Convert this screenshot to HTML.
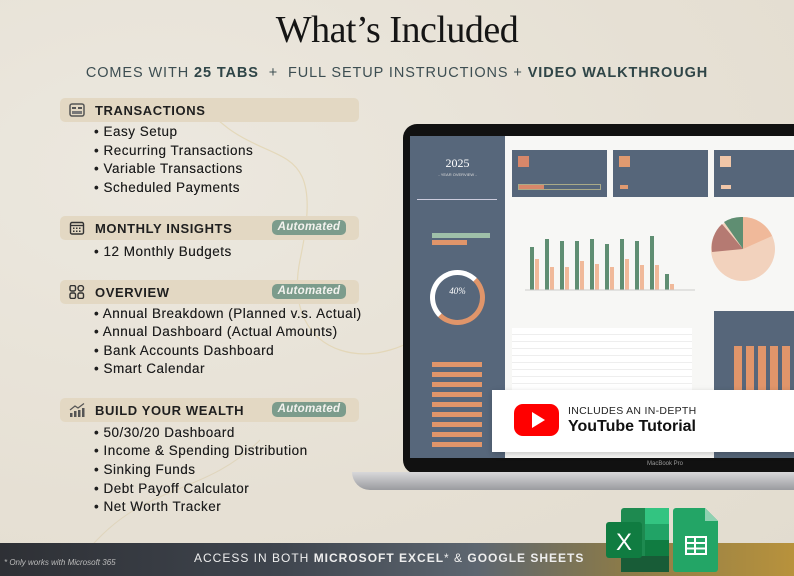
<!DOCTYPE html>
<html><head><meta charset="utf-8"><style>
*{margin:0;padding:0;box-sizing:border-box}
body{width:794px;height:576px;overflow:hidden;background:#e9e4da;font-family:"Liberation Sans",sans-serif;position:relative}
.bg{position:absolute;inset:0;background:radial-gradient(ellipse at 20% 30%,#ece8df 0%,#e6e0d4 60%,#e2dccf 100%)}
.title{position:absolute;top:8px;left:0;width:794px;text-align:center;font-family:"Liberation Serif",serif;font-size:38px;color:#151515;letter-spacing:-0.5px}
.sub{position:absolute;top:65px;left:0;width:794px;text-align:center;font-size:14.5px;color:#3d4e52;letter-spacing:0.9px}
.sub b{color:#2f4547}
.hb{position:absolute;left:60px;width:299px;height:24px;background:#e3d8c3;border-radius:5px}
.hb .t{position:absolute;left:35px;top:5px;font-weight:bold;font-size:13px;letter-spacing:0.6px;color:#1f1f1f}
.hb .ic{position:absolute;left:9px;top:5px;width:16px;height:14px}
.pill{position:absolute;left:212px;top:4px;width:74px;height:15px;background:#7c9c8c;border-radius:5px;color:#f2f2ee;font-style:italic;font-weight:bold;font-size:11.5px;text-align:center;line-height:15px;letter-spacing:0.3px}
.li{position:absolute;left:94px;font-size:13.5px;color:#1e1e1e;letter-spacing:0.5px;text-shadow:0 0 0.3px #1e1e1e}
.lap{position:absolute;left:403px;top:124px;width:420px;height:350px;background:#111;border-radius:14px}
.scr{position:absolute;left:410px;top:136px;width:390px;height:322px;background:#f7f7f5;overflow:hidden}
.side{position:absolute;left:0;top:0;width:95px;height:322px;background:#57677b}
.card{position:absolute;top:14px;width:95px;height:47px;background:#56667a}
.base{position:absolute;left:352px;top:472px;width:450px;height:18px;background:linear-gradient(#d8d8da,#9a9b9f);border-radius:0 0 0 30px}
.yt{position:absolute;left:492px;top:390px;width:310px;height:62px;background:#fff;box-shadow:0 2px 6px rgba(0,0,0,.2)}
.foot{position:absolute;left:0;top:543px;width:794px;height:33px;background:linear-gradient(90deg,#2e3035 0%,#3f454e 35%,#5d6670 60%,#8a7a4a 78%,#b8923c 100%)}
</style></head><body>
<div class="bg"></div>
<svg style="position:absolute;left:0;top:0" width="794" height="576"><path d="M200 100 C260 180 330 120 300 260 C280 360 380 380 440 320" stroke="#e0cfa3" stroke-width="1.2" fill="none" opacity=".6"/><path d="M80 560 C140 480 200 500 260 440" stroke="#d9c9a4" fill="none" opacity=".5"/></svg>
<div class="title">What’s Included</div>
<div class="sub">COMES WITH <b>25 TABS</b> &nbsp;+ &nbsp;FULL SETUP INSTRUCTIONS + <b>VIDEO WALKTHROUGH</b></div>

<div class="hb" style="top:98px"><svg class="ic" viewBox="0 0 16 14"><rect x="1" y="1" width="14" height="12" rx="2" fill="none" stroke="#555" stroke-width="1.5"/><rect x="3" y="4" width="4" height="2" fill="#555"/><rect x="9" y="4" width="4" height="2" fill="#555"/><rect x="3" y="8" width="10" height="3" fill="#777"/></svg><div class="t">TRANSACTIONS</div></div>
<div class="li" style="top:124px">• Easy Setup</div>
<div class="li" style="top:143px">• Recurring Transactions</div>
<div class="li" style="top:161px">• Variable Transactions</div>
<div class="li" style="top:180px">• Scheduled Payments</div>

<div class="hb" style="top:216px"><svg class="ic" viewBox="0 0 16 14"><rect x="1.5" y="1.5" width="13" height="11.5" rx="1.5" fill="none" stroke="#333" stroke-width="1.4"/><line x1="1.5" y1="4.5" x2="14.5" y2="4.5" stroke="#333" stroke-width="1.3"/><g fill="#333"><rect x="4" y="6.5" width="1.5" height="1.5"/><rect x="7" y="6.5" width="1.5" height="1.5"/><rect x="10" y="6.5" width="1.5" height="1.5"/><rect x="4" y="9.5" width="1.5" height="1.5"/><rect x="7" y="9.5" width="1.5" height="1.5"/><rect x="10" y="9.5" width="1.5" height="1.5"/></g></svg><div class="t">MONTHLY INSIGHTS</div><div class="pill">Automated</div></div>
<div class="li" style="top:244px">• 12 Monthly Budgets</div>

<div class="hb" style="top:280px"><svg class="ic" viewBox="0 0 16 14"><g fill="none" stroke="#333" stroke-width="1.4"><rect x="1" y="0.5" width="5.5" height="5.5" rx="1.5"/><rect x="9" y="0.5" width="5.5" height="5.5" rx="2.7"/><rect x="1" y="8" width="5.5" height="5.5" rx="1.5"/><rect x="9" y="8" width="5.5" height="5.5" rx="1.5"/></g></svg><div class="t">OVERVIEW</div><div class="pill">Automated</div></div>
<div class="li" style="top:306px">• Annual Breakdown (Planned v.s. Actual)</div>
<div class="li" style="top:324px">• Annual Dashboard (Actual Amounts)</div>
<div class="li" style="top:343px">• Bank Accounts Dashboard</div>
<div class="li" style="top:361px">• Smart Calendar</div>

<div class="hb" style="top:398px"><svg class="ic" viewBox="0 0 16 14"><g fill="#555"><rect x="1" y="10" width="2.5" height="4"/><rect x="5" y="8" width="2.5" height="6"/><rect x="9" y="7" width="2.5" height="7"/><rect x="13" y="5" width="2.5" height="9"/></g><path d="M1 7 L6 3 L9 5 L15 0.5" stroke="#555" fill="none" stroke-width="1.2"/></svg><div class="t">BUILD YOUR WEALTH</div><div class="pill">Automated</div></div>
<div class="li" style="top:425px">• 50/30/20 Dashboard</div>
<div class="li" style="top:443px">• Income &amp; Spending Distribution</div>
<div class="li" style="top:462px">• Sinking Funds</div>
<div class="li" style="top:481px">• Debt Payoff Calculator</div>
<div class="li" style="top:499px">• Net Worth Tracker</div>

<div class="lap"></div>
<div class="scr">
 <div class="side">
  <div style="position:absolute;top:20px;width:95px;text-align:center;font-family:'Liberation Serif',serif;color:#fff;font-size:12px">2025</div>
  <div style="position:absolute;top:36px;width:95px;text-align:center;color:#ddd;font-size:4px">- YEAR OVERVIEW -</div>
  <div style="position:absolute;left:7px;top:63px;width:80px;border-top:1px solid #ccd"></div>
  <div style="position:absolute;left:22px;top:97px;width:58px;height:5px;background:#9fc0a9"></div>
  <div style="position:absolute;left:22px;top:104px;width:35px;height:5px;background:#e0956a"></div>
  <div style="position:absolute;left:20px;top:134px;width:55px;height:55px;border-radius:50%;border:5px solid #e0956a;border-left-color:#fff;border-top-color:#fff"></div>
  <div style="position:absolute;left:20px;top:150px;width:55px;text-align:center;color:#fff;font-style:italic;font-size:9px;font-family:'Liberation Serif',serif">40%</div>
  <div style="position:absolute;left:22px;top:226px;width:50px;height:90px;background:repeating-linear-gradient(#e0956a 0 5px,transparent 5px 10px)"></div>
 </div>
 <div class="card" style="left:102px"><div style="position:absolute;left:6px;top:6px;width:11px;height:11px;background:#d7876a"></div><div style="position:absolute;left:6px;top:34px;width:83px;height:6px;border:1px solid #aa8;"></div><div style="position:absolute;left:7px;top:35px;width:25px;height:4px;background:#d7876a"></div></div>
 <div class="card" style="left:203px"><div style="position:absolute;left:6px;top:6px;width:11px;height:11px;background:#e09a70"></div><div style="position:absolute;left:7px;top:35px;width:8px;height:4px;background:#e09a70"></div></div>
 <div class="card" style="left:304px;width:90px"><div style="position:absolute;left:6px;top:6px;width:11px;height:11px;background:#f0c6a8"></div><div style="position:absolute;left:7px;top:35px;width:10px;height:4px;background:#f0c6a8"></div></div>
 <svg style="position:absolute;left:110px;top:95px" width="180" height="65"><g fill="#5f8e72"><rect x="10" y="16" width="4" height="43"/><rect x="25" y="8" width="4" height="51"/><rect x="40" y="10" width="4" height="49"/><rect x="55" y="10" width="4" height="49"/><rect x="70" y="8" width="4" height="51"/><rect x="85" y="13" width="4" height="46"/><rect x="100" y="8" width="4" height="51"/><rect x="115" y="10" width="4" height="49"/><rect x="130" y="5" width="4" height="54"/><rect x="145" y="43" width="4" height="16"/></g><g fill="#f0b99a"><rect x="15" y="28" width="4" height="31"/><rect x="30" y="36" width="4" height="23"/><rect x="45" y="36" width="4" height="23"/><rect x="60" y="30" width="4" height="29"/><rect x="75" y="33" width="4" height="26"/><rect x="90" y="36" width="4" height="23"/><rect x="105" y="28" width="4" height="31"/><rect x="120" y="34" width="4" height="25"/><rect x="135" y="34" width="4" height="25"/><rect x="150" y="53" width="4" height="6"/></g><line x1="5" y1="59" x2="175" y2="59" stroke="#ccc"/></svg>
 <svg style="position:absolute;left:300px;top:78px" width="70" height="70"><circle cx="33" cy="35" r="32" fill="#f2d2bd"/><path d="M33 35 L33 3 A32 32 0 0 1 62 22 Z" fill="#f0b99a"/><path d="M33 35 L2 38 A32 32 0 0 1 12 10 L33 35Z" fill="#b57a72"/><path d="M33 35 L14 8 A32 32 0 0 1 33 3 Z" fill="#5f8e72"/></svg>
 <div style="position:absolute;left:102px;top:192px;width:180px;height:70px;background:repeating-linear-gradient(#fff 0 6px,#eee 6px 7px)"></div>
 <div style="position:absolute;left:304px;top:175px;width:90px;height:150px;background:#56667a"><div style="position:absolute;left:20px;top:35px;width:60px;height:50px;background:repeating-linear-gradient(90deg,#e0956a 0 8px,transparent 8px 12px)"></div></div>
</div>
<div style="position:absolute;left:410px;top:458px;width:390px;height:14px;background:#111;color:#999;font-size:6px;text-align:center;padding-left:120px;line-height:12px">MacBook Pro</div>
<div class="base"></div>
<div class="yt">
 <div style="position:absolute;left:22px;top:14px;width:45px;height:32px;background:#f00;border-radius:9px"></div>
 <div style="position:absolute;left:40px;top:22px;width:0;height:0;border-left:13px solid #fff;border-top:8px solid transparent;border-bottom:8px solid transparent"></div>
 <div style="position:absolute;left:76px;top:15px;font-size:10.5px;color:#222;letter-spacing:0.3px">INCLUDES AN IN-DEPTH</div>
 <div style="position:absolute;left:76px;top:28px;font-size:16px;font-weight:bold;color:#111">YouTube Tutorial</div>
</div>
<div class="foot">
 <div style="position:absolute;left:4px;top:15px;font-size:8px;font-style:italic;color:#bbb">* Only works with Microsoft 365</div>
 <div style="position:absolute;left:194px;top:8px;font-size:12px;color:#eee;letter-spacing:1px">ACCESS IN BOTH <b>MICROSOFT EXCEL</b>* &amp; <b>GOOGLE SHEETS</b></div>
</div>
<svg style="position:absolute;left:600px;top:505px" width="125" height="71">
 <rect x="21" y="3" width="48" height="64" rx="3" fill="#1e8a50"/>
 <rect x="45" y="3" width="24" height="16" fill="#33c481"/><rect x="45" y="19" width="24" height="16" fill="#21a366"/><rect x="45" y="35" width="24" height="16" fill="#107c41"/><rect x="21" y="51" width="48" height="16" fill="#185c37"/>
 <rect x="6" y="17" width="36" height="36" rx="3" fill="#107c41"/>
 <text x="24" y="45" font-family="Liberation Sans" font-size="24" fill="#fff" text-anchor="middle">X</text>
 <path d="M76 3 H105 L118 16 V64 a3 3 0 0 1 -3 3 H76 a3 3 0 0 1 -3 -3 V6 a3 3 0 0 1 3 -3Z" fill="#23a566"/>
 <path d="M105 3 V16 H118Z" fill="#8ed1b1"/>
 <g fill="none" stroke="#fff" stroke-width="2"><rect x="86" y="32" width="20" height="17"/><line x1="86" y1="38" x2="106" y2="38"/><line x1="86" y1="43.5" x2="106" y2="43.5"/><line x1="95" y1="32" x2="95" y2="49"/></g>
</svg>
</body></html>
